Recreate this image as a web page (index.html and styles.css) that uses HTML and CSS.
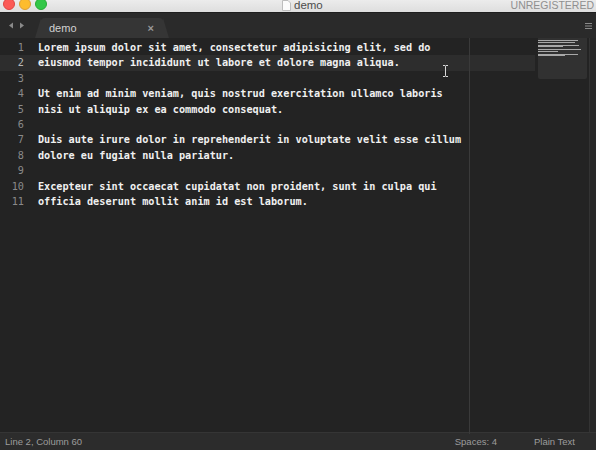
FILE: index.html
```html
<!DOCTYPE html>
<html>
<head>
<meta charset="utf-8">
<link rel="stylesheet" href="styles.css">
</head>
<body>
<div class="window">
  <div class="titlebar">
    <div class="lights">
      <span class="light red"></span>
      <span class="light yellow"></span>
      <span class="light green"></span>
    </div>
    <div class="title">
      <svg class="doc" width="9" height="11" viewBox="0 0 9 11"><path d="M0.5 0.5h5.5l2.5 2.5v7.5h-8z" fill="#fbfbfb" stroke="#bdbdbd" stroke-width="1"/></svg>
      <span>demo</span>
    </div>
    <div class="unreg">UNREGISTERED</div>
  </div>
  <div class="tabbar">
    <div class="navs">
      <svg width="6" height="7" viewBox="0 0 6 7"><path d="M5 0.5L1 3.5L5 6.5z" fill="#8a8a8a"/></svg>
      <svg width="6" height="7" viewBox="0 0 6 7"><path d="M1 0.5L5 3.5L1 6.5z" fill="#8a8a8a"/></svg>
    </div>
    <div class="tab">
      <span class="tabname">demo</span>
      <span class="tabclose">×</span>
    </div>
    <div class="spacer"></div>
    <div class="menu">
      <svg width="7" height="6" viewBox="0 0 7 6"><path d="M0 0.5h7M0 3h7M0 5.5h7" stroke="#8a8a8a" stroke-width="1"/></svg>
    </div>
  </div>
  <div class="editor">
    <div class="gutter">
      <div>1</div><div class="cur">2</div><div>3</div><div>4</div><div>5</div><div>6</div><div>7</div><div>8</div><div>9</div><div>10</div><div>11</div>
    </div>
    <div class="code">
      <div class="line">Lorem ipsum dolor sit amet, consectetur adipisicing elit, sed do</div>
      <div class="line cur">eiusmod tempor incididunt ut labore et dolore magna aliqua.</div>
      <div class="line">&nbsp;</div>
      <div class="line">Ut enim ad minim veniam, quis nostrud exercitation ullamco laboris</div>
      <div class="line">nisi ut aliquip ex ea commodo consequat.</div>
      <div class="line">&nbsp;</div>
      <div class="line">Duis aute irure dolor in reprehenderit in voluptate velit esse cillum</div>
      <div class="line">dolore eu fugiat nulla pariatur.</div>
      <div class="line">&nbsp;</div>
      <div class="line">Excepteur sint occaecat cupidatat non proident, sunt in culpa qui</div>
      <div class="line">officia deserunt mollit anim id est laborum.</div>
      <div class="ruler"></div>
      <svg class="cursor" width="7" height="12" viewBox="0 0 7 12"><path d="M1 0.5h2l0.5 1l0.5 -1h2M3.5 1.5v9M1 11.5h2l0.5 -1l0.5 1h2" stroke="#d8d8d8" stroke-width="1" fill="none"/></svg>
    </div>
    <div class="minimap">
      <div class="mview">
        <div class="mline" style="width:40px"></div>
        <div class="mline" style="width:37px"></div>
        <div class="mline" style="width:0"></div>
        <div class="mline" style="width:41px"></div>
        <div class="mline" style="width:25px"></div>
        <div class="mline" style="width:0"></div>
        <div class="mline" style="width:43px"></div>
        <div class="mline" style="width:20px"></div>
        <div class="mline" style="width:0"></div>
        <div class="mline" style="width:40px"></div>
        <div class="mline" style="width:27px"></div>
      </div>
    </div>
    <div class="scroll"></div>
  </div>
  <div class="statusbar">
    <span class="pos">Line 2, Column 60</span>
    <span class="spacer"></span>
    <span class="spaces">Spaces: 4</span>
    <span class="syntax">Plain Text</span>
  </div>
</div>
</body>
</html>
```
FILE: styles.css
```css
html, body {
  margin: 0;
  padding: 0;
  width: 596px;
  height: 450px;
  overflow: hidden;
  background: #232323;
}
.window {
  display: flex;
  flex-direction: column;
  width: 596px;
  height: 450px;
}
.titlebar {
  height: 12px;
  background: linear-gradient(#ececec, #dedede);
  position: relative;
  display: flex;
  align-items: center;
  font-family: "Liberation Sans", Arial, sans-serif;
}
.lights {
  display: flex;
  gap: 4px;
  padding-left: 3px;
  align-self: flex-start;
  margin-top: -2px;
}
.light {
  width: 12px;
  height: 12px;
  border-radius: 50%;
  display: block;
}
.red { background: #fc5b57; border: 0.5px solid #df4744; box-sizing: border-box; }
.yellow { background: #fdbc2e; border: 0.5px solid #de9f34; box-sizing: border-box; }
.green { background: #33c748; border: 0.5px solid #27aa35; box-sizing: border-box; }
.title {
  position: absolute;
  left: 282px;
  top: 0;
  display: flex;
  align-items: center;
  gap: 3px;
  font-size: 11.5px;
  line-height: 11px;
  color: #4d4d4d;
}
.doc { margin-top: -1px; }
.unreg {
  position: absolute;
  right: 2px;
  top: 0;
  line-height: 10px;
  font-size: 10.5px;
  color: #8f8f8f;
}
.tabbar {
  height: 26px;
  background: #2a2a2a;
  border-top: 1px solid #1e1e1e;
  box-sizing: border-box;
  display: flex;
  align-items: flex-end;
  font-family: "Liberation Sans", Arial, sans-serif;
}
.navs {
  width: 38px;
  height: 100%;
  display: flex;
  align-items: center;
  gap: 5px;
  padding-left: 8px;
  box-sizing: border-box;
}
.tab {
  width: 124px;
  height: 20px;
  background: #353535;
  position: relative;
  display: flex;
  align-items: center;
  padding-left: 9px;
  box-sizing: border-box;
  border-radius: 5px 5px 0 0;
  margin-left: 2px;
}
.tab::before, .tab::after {
  content: "";
  position: absolute;
  bottom: 0;
  width: 0;
  height: 0;
  border-bottom: 20px solid #353535;
}
.tab::before { left: -5px; border-left: 6px solid transparent; }
.tab::after { right: -5px; border-right: 6px solid transparent; }
.tabname {
  font-size: 11px;
  color: #d2d2d2;
  flex: 1;
}
.tabclose {
  font-size: 11px;
  color: #9a9a9a;
  margin-right: 10px;
  font-weight: bold;
}
.spacer { flex: 1; }
.menu {
  height: 100%;
  display: flex;
  align-items: center;
  padding-right: 4px;
}
.editor {
  flex: 1;
  display: flex;
  background: #232323;
  position: relative;
  font-family: "DejaVu Sans Mono", Menlo, monospace;
  font-size: 10.2px;
  font-weight: bold;
  line-height: 15.4px;
  padding-top: 2px;
}
.gutter {
  width: 24px;
  text-align: right;
  color: #8a8a8a;
  font-weight: normal;
  padding-right: 14px;
}
.gutter .cur { color: #b8b8b8; background: #2d2d2d; margin-right: -14px; padding-right: 14px; }
.code {
  width: 499px;
  position: relative;
  color: #f0f0f0;
}
.line {
  white-space: pre;
  height: 15.4px;
}
.line.cur { background: #2d2d2d; }
.ruler {
  position: absolute;
  left: 431px;
  top: -2px;
  width: 1px;
  height: 396px;
  background: #3a3a3a;
}
.cursor {
  position: absolute;
  left: 404px;
  top: 25px;
}
.minimap {
  width: 52px;
  display: flex;
  flex-direction: column;
  margin-top: -2px;
  padding-left: 3px;
  box-sizing: border-box;
}
.mview {
  height: 41px;
  background: #313131;
  border-radius: 0 0 2px 2px;
  padding-top: 2px;
  box-sizing: border-box;
}
.mline {
  height: 1px;
  margin-bottom: 0.5px;
  background: #a8a8a8;
}
.scroll {
  width: 6px;
  margin-top: -2px;
  margin-left: 2px;
  background: #282828;
  border-left: 1px solid #333;
}
.statusbar {
  height: 18px;
  background: #2c2c2c;
  border-top: 1px solid #353535;
  box-sizing: border-box;
  display: flex;
  align-items: center;
  font-family: "Liberation Sans", Arial, sans-serif;
  font-size: 9.5px;
  color: #9c9c9c;
  padding: 0 21px 0 5px;
}
.spaces { margin-right: 37px; }
```
